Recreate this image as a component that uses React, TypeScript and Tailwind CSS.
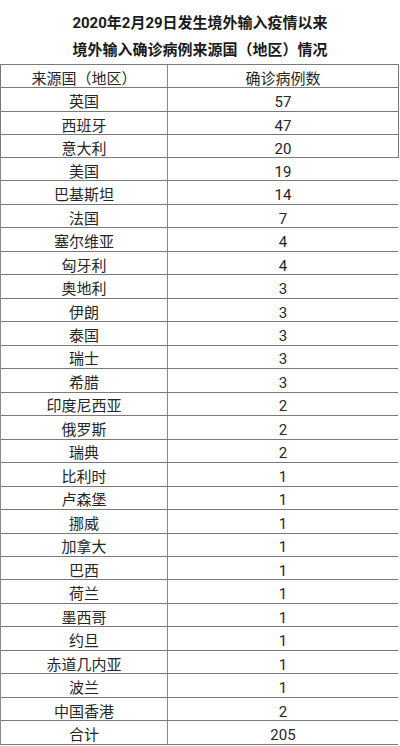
const top: [string, string][] = [
  ["英国", "57"],
  ["西班牙", "47"],
  ["意大利", "20"],
];

const rest: [string, string][] = [
  ["美国", "19"],
  ["巴基斯坦", "14"],
  ["法国", "7"],
  ["塞尔维亚", "4"],
  ["匈牙利", "4"],
  ["奥地利", "3"],
  ["伊朗", "3"],
  ["泰国", "3"],
  ["瑞士", "3"],
  ["希腊", "3"],
  ["印度尼西亚", "2"],
  ["俄罗斯", "2"],
  ["瑞典", "2"],
  ["比利时", "1"],
  ["卢森堡", "1"],
  ["挪威", "1"],
  ["加拿大", "1"],
  ["巴西", "1"],
  ["荷兰", "1"],
  ["墨西哥", "1"],
  ["约旦", "1"],
  ["赤道几内亚", "1"],
  ["波兰", "1"],
  ["中国香港", "2"],
  ["合计", "205"],
];

function Row({ name, count, h }: { name: string; count: string; h: string }) {
  return (
    <div className={`grid grid-cols-[167px_1fr] border-b border-[#7a7a7a] ${h}`}>
      <div className="flex items-center justify-center border-r border-[#8a8a8a] pt-[6px]">
        {name}
      </div>
      <div className="flex items-center justify-center pt-[6px]">{count}</div>
    </div>
  );
}

export default function App() {
  return (
    <div className="w-[400px] h-[746px] overflow-hidden bg-white text-[15px] text-[#262626] font-['Roboto','Noto_Sans_CJK_SC',sans-serif]">
      {/* Title */}
      <div className="pt-[10px] text-center font-bold leading-[27px] text-[#1a1a1a]">
        <div>2020年2月29日发生境外输入疫情以来</div>
        <div>境外输入确诊病例来源国（地区）情况</div>
      </div>

      {/* Upper part of the table */}
      <div className="w-[399px] border-l border-r border-t border-[#7a7a7a] leading-none">
        <Row name="来源国（地区）" count="确诊病例数" h="h-[23px]" />
        <Row name={top[0][0]} count={top[0][1]} h="h-[24px]" />
        <Row name={top[1][0]} count={top[1][1]} h="h-[23px]" />
        <Row name={top[2][0]} count={top[2][1]} h="h-[23px]" />
      </div>

      {/* Lower part */}
      <div className="w-[398px] border-l border-[#8a8a8a] leading-none">
        {rest.map(([n, c]) => (
          <Row key={n} name={n} count={c} h="h-[23.48px]" />
        ))}
      </div>
    </div>
  );
}
